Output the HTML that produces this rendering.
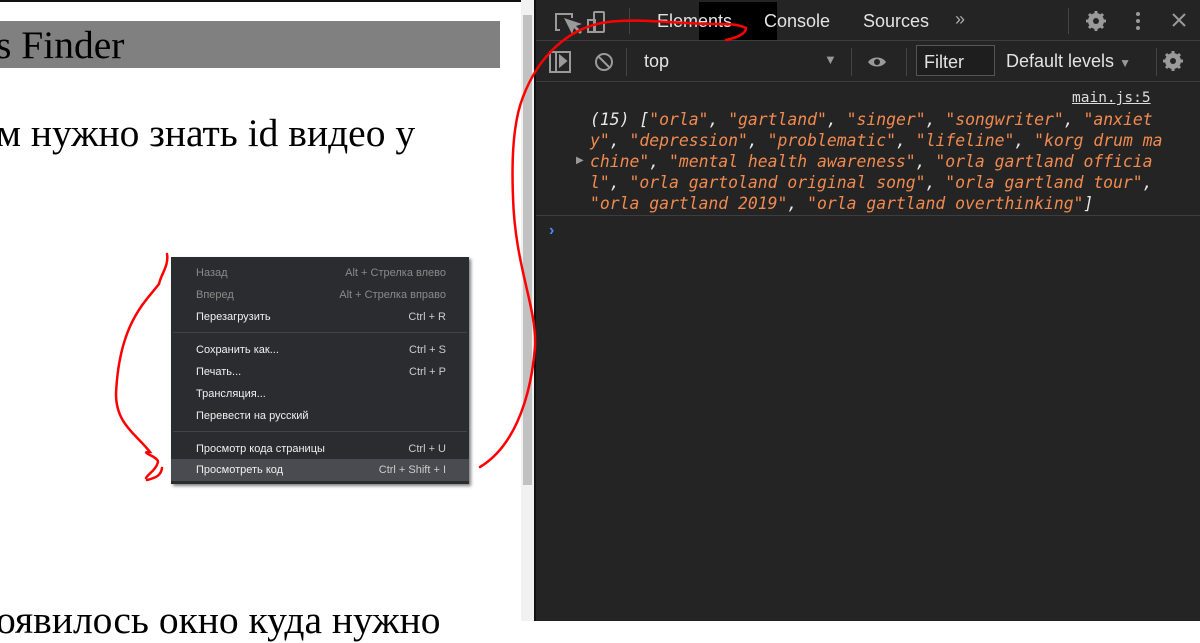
<!DOCTYPE html>
<html><head><meta charset="utf-8"><style>
*{margin:0;padding:0;box-sizing:border-box}
body{width:1200px;height:621px;overflow:hidden;position:relative;background:#fff;font-family:"Liberation Sans",sans-serif}
.abs{position:absolute}
.serif{font-family:"Liberation Serif",serif;color:#000;font-size:39.5px;white-space:nowrap}
.dt{left:536px;top:0;width:664px;height:621px;background:#242424}
.tb{color:#e3e3e3;font-size:18px;white-space:nowrap}
.mono{font-family:"DejaVu Sans Mono","Liberation Mono",monospace;font-style:italic;font-size:16.4px;line-height:21px;color:#e8e8e8;white-space:pre}
.s{color:#f08a50}
.menu{left:171px;top:257px;width:298px;height:227px;background:#2b2c30;box-shadow:2px 2px 3px rgba(0,0,0,.5);font-size:11px;color:#f0f0f0}
.mi{position:absolute;left:0;width:298px;height:22px;line-height:22px}
.mi span{position:absolute;left:25px}
.mi b{position:absolute;right:23px;font-weight:normal;color:#ccc}
.dis{color:#8a8a8a}
.sep{position:absolute;left:2px;right:2px;height:1px;background:#444}
</style></head><body>
<div class="abs" style="left:0;top:0;width:536px;height:2px;background:#111"></div>
<div class="abs" style="left:0;top:21px;width:500px;height:47px;background:#808080"></div>
<div class="abs serif" style="left:-4px;top:22px">s Finder</div>
<div class="abs serif" style="left:-4px;top:110px">м нужно знать id видео у</div>
<div class="abs serif" style="left:-4px;top:597px">оявилось окно куда нужно</div>
<div class="abs" style="left:521px;top:0;width:13px;height:621px;background:#f1f1f1"></div>
<div class="abs" style="left:523px;top:15px;width:9px;height:470px;background:#c1c1c1"></div>
<div class="abs" style="left:534px;top:0;width:2px;height:621px;background:#111"></div>
<div class="abs dt"></div>
<div class="abs" style="left:536px;top:40px;width:664px;height:1px;background:#3d3d3d"></div>
<div class="abs" style="left:536px;top:81px;width:664px;height:1px;background:#3d3d3d"></div>
<div class="abs" style="left:536px;top:215px;width:664px;height:1px;background:#3d3d3d"></div>
<div class="abs" style="left:699px;top:2px;width:78px;height:38px;background:#000"></div>
<div class="abs tb" style="left:657px;top:11px">Elements</div>
<div class="abs tb" style="left:764px;top:11px">Console</div>
<div class="abs tb" style="left:863px;top:11px">Sources</div>
<div class="abs tb" style="left:955px;top:9px;color:#aaa">»</div>
<div class="abs tb" style="left:644px;top:51px">top</div>
<div class="abs tb" style="left:824px;top:52px;color:#999;font-size:13px">▼</div>
<div class="abs" style="left:916px;top:45px;width:79px;height:31px;border:1px solid #555;background:#1e1e1e"></div>
<div class="abs tb" style="left:924px;top:52px">Filter</div>
<div class="abs tb" style="left:1006px;top:51px">Default levels <span style="font-size:12px;color:#999">▼</span></div>
<div class="abs" style="left:626px;top:48px;width:1px;height:28px;background:#444"></div>
<div class="abs" style="left:851px;top:48px;width:1px;height:28px;background:#444"></div>
<div class="abs" style="left:906px;top:48px;width:1px;height:28px;background:#444"></div>
<div class="abs" style="left:1156px;top:48px;width:1px;height:28px;background:#444"></div>
<div class="abs" style="left:1068px;top:8px;width:1px;height:26px;background:#444"></div>
<div class="abs" style="left:629px;top:8px;width:1px;height:26px;background:#444"></div>
<svg class="abs" style="left:536px;top:0" width="664" height="82" fill="none" stroke="#9a9a9a" stroke-width="2">
<path d="M24 30h-4v-16h16v4"/><path d="M28 18l8 16 2-6 6 6 2-2-6-6 6-2z" fill="#9a9a9a" stroke="none"/>
<rect x="58" y="12" width="10" height="20" rx="1"/><rect x="52" y="20" width="7" height="12"/>
<rect x="14" y="52" width="20" height="20"/><path d="M20 52v20"/><path d="M24 56l6 5-6 5z" fill="#9a9a9a"/>
<circle cx="68" cy="62" r="8"/><path d="M62 56l12 12"/>
<path d="M332 62c4-6 14-6 18 0c-4 6-14 6-18 0z" fill="#9a9a9a" stroke="none"/><circle cx="341" cy="62" r="3" fill="#242424" stroke="none"/>
<g stroke="none" fill="#9a9a9a"><circle cx="560" cy="21" r="8"/><circle cx="637" cy="61" r="8"/><circle cx="602" cy="14" r="2"/><circle cx="602" cy="21" r="2"/><circle cx="602" cy="28" r="2"/></g>
<path d="M560 11v20M550 21h20M553 14l14 14M567 14l-14 14" stroke-width="3"/>
<path d="M637 51v20M627 61h20M630 54l14 14M644 54l-14 14" stroke-width="3"/>
<circle cx="560" cy="21" r="3" fill="#242424" stroke="none"/><circle cx="637" cy="61" r="3" fill="#242424" stroke="none"/>
<path d="M637 14l12 12M649 14l-12 12"/>
</svg>
<div class="abs" style="left:1072px;top:90px;color:#ddd;font-family:'DejaVu Sans Mono',monospace;font-size:14.5px;text-decoration:underline">main.js:5</div>
<div class="abs mono" style="left:590px;top:109px">(15) [<span class="s">"orla"</span>, <span class="s">"gartland"</span>, <span class="s">"singer"</span>, <span class="s">"songwriter"</span>, <span class="s">"anxiet</span>
<span class="s">y"</span>, <span class="s">"depression"</span>, <span class="s">"problematic"</span>, <span class="s">"lifeline"</span>, <span class="s">"korg drum ma</span>
<span class="s">chine"</span>, <span class="s">"mental health awareness"</span>, <span class="s">"orla gartland officia</span>
<span class="s">l"</span>, <span class="s">"orla gartoland original song"</span>, <span class="s">"orla gartland tour"</span>,
<span class="s">"orla gartland 2019"</span>, <span class="s">"orla gartland overthinking"</span>]</div>
<div class="abs" style="left:576px;top:155px;color:#999;font-size:10px">▶</div>
<div class="abs" style="left:549px;top:222px;color:#4a8cf0;font-size:16px;font-weight:bold">›</div>
<div class="abs menu">
<div class="mi dis" style="top:5px"><span>Назад</span><b style="color:#8a8a8a">Alt + Стрелка влево</b></div>
<div class="mi dis" style="top:27px"><span>Вперед</span><b style="color:#8a8a8a">Alt + Стрелка вправо</b></div>
<div class="mi" style="top:49px"><span>Перезагрузить</span><b>Ctrl + R</b></div>
<div class="sep" style="top:75px"></div>
<div class="mi" style="top:82px"><span>Сохранить как...</span><b>Ctrl + S</b></div>
<div class="mi" style="top:104px"><span>Печать...</span><b>Ctrl + P</b></div>
<div class="mi" style="top:126px"><span>Трансляция...</span></div>
<div class="mi" style="top:148px"><span>Перевести на русский</span></div>
<div class="sep" style="top:174px"></div>
<div class="mi" style="top:181px"><span>Просмотр кода страницы</span><b>Ctrl + U</b></div>
<div class="mi" style="top:202px;background:#4a4b50"><span>Просмотреть код</span><b>Ctrl + Shift + I</b></div>
</div>
<svg class="abs" style="left:0;top:0" width="1200" height="621" fill="none" stroke="#f00" stroke-width="2.5" stroke-linecap="round">
<path d="M167 254c2 12-6 20-8 30c-14 18-40 40-43 110c0 30 20 40 34 58c-12 0 8 4 8 10c-2 8-10 12-12 16"/>
<path d="M147 480c8-2 14-4 15-12"/>
<path d="M480 467c30-18 50-60 55-120c2-40-20-80-22-150c-2-50 2-80 10-100c15-40 45-70 85-75c30-4 70 2 110 2c10 0 20 0 28 4c0 6-10 10-20 12"/>
</svg>
</body></html>
